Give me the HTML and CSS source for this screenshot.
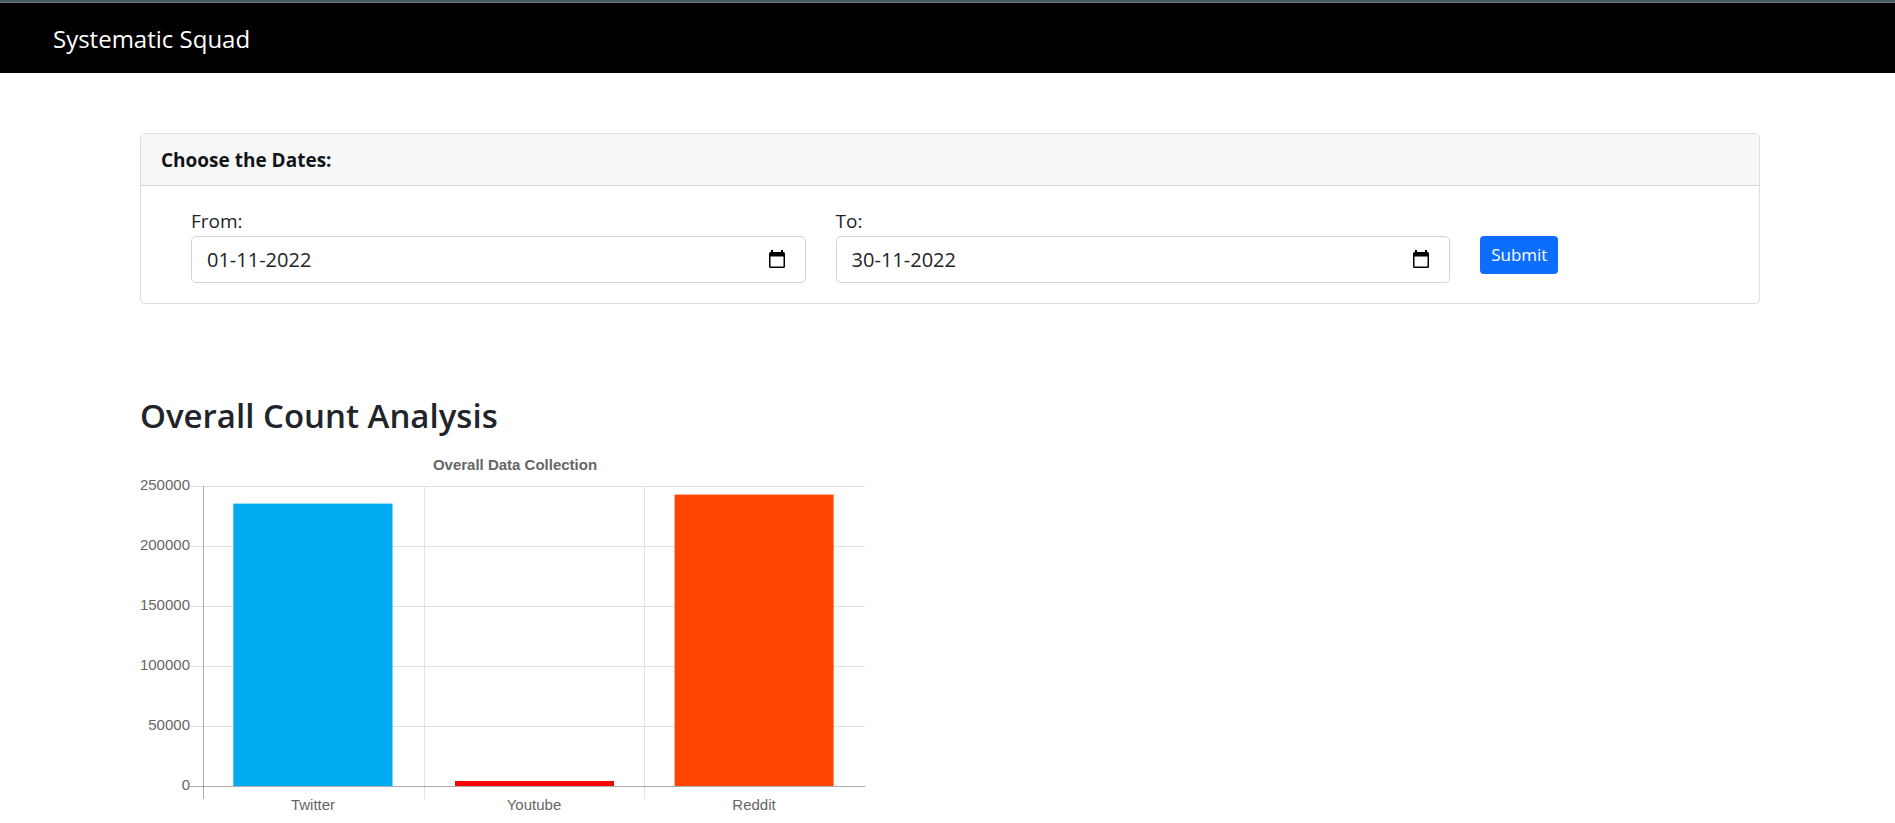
FILE: index.html
```html
<!DOCTYPE html>
<html lang="en">
<head>
<meta charset="utf-8">
<title>Systematic Squad</title>
<link rel="stylesheet" href="styles.css">
</head>
<body>
<header class="navbar">
  <a class="brand" href="#">Systematic Squad</a>
</header>
<main class="page">
  <section class="card">
    <h1 class="card-header">Choose the Dates:</h1>
    <form class="date-form">
      <div class="field">
        <label for="from">From:</label>
        <div class="date-box">
          <input id="from" type="text" value="01-11-2022">
          <button class="picker" type="button" aria-label="Pick start date">
            <svg viewBox="0 0 20 20" width="20" height="20"><path fill-rule="evenodd" d="M4 0h2v2h8V0h2v2h.5A1.500 1.500 0 0 1 18 3.500V16.500a1.500 1.500 0 0 1-1.500 1.500h-13A1.500 1.500 0 0 1 2 16.500V3.500A1.500 1.500 0 0 1 3.500 2H4zM3.500 6.500V16.500h13V6.500z"/></svg>
          </button>
        </div>
      </div>
      <div class="field">
        <label for="to">To:</label>
        <div class="date-box">
          <input id="to" type="text" value="30-11-2022">
          <button class="picker" type="button" aria-label="Pick end date">
            <svg viewBox="0 0 20 20" width="20" height="20"><path fill-rule="evenodd" d="M4 0h2v2h8V0h2v2h.5A1.500 1.500 0 0 1 18 3.500V16.500a1.500 1.500 0 0 1-1.500 1.500h-13A1.500 1.500 0 0 1 2 16.500V3.500A1.500 1.500 0 0 1 3.500 2H4zM3.500 6.500V16.500h13V6.500z"/></svg>
          </button>
        </div>
      </div>
      <div class="action">
        <button class="submit" type="submit">Submit</button>
      </div>
    </form>
  </section>
  <section class="analysis">
    <h2>Overall Count Analysis</h2>
    <svg class="chart" viewBox="0 0 750 375" role="img" aria-label="Overall Data Collection">
      <g class="grid">
        <path d="M50 41.500H725M50 101.500H725M50 161.500H725M50 221.500H725M50 281.500H725"/>
        <path d="M284.500 41V354M504.500 41V354"/>
      </g>
      <rect class="twitter" x="93.300" y="58.600" width="159.200" height="282.400"/>
      <rect class="youtube" x="315" y="336" width="159" height="5"/>
      <rect class="reddit" x="534.600" y="49.600" width="159" height="291.400"/>
      <g class="axis">
        <path d="M50 341.500H725M63.500 41V354"/>
      </g>
      <text class="title" x="375" y="25">Overall Data Collection</text>
      <g class="y-labels">
        <text x="50" y="45">250000</text>
        <text x="50" y="105">200000</text>
        <text x="50" y="165">150000</text>
        <text x="50" y="225">100000</text>
        <text x="50" y="285">50000</text>
        <text x="50" y="345">0</text>
      </g>
      <g class="x-labels">
        <text x="173" y="365">Twitter</text>
        <text x="394" y="365">Youtube</text>
        <text x="614" y="365">Reddit</text>
      </g>
    </svg>
  </section>
</main>
</body>
</html>
```
FILE: styles.css
```css
* { box-sizing: border-box; }

body {
  margin: 0;
  background: #fff;
  color: #212529;
  font-family: "Segoe UI", "Open Sans", "Noto Sans", sans-serif;
  font-size: 19px;
  line-height: 30px;
}

.navbar {
  display: flex;
  align-items: center;
  height: 73px;
  padding: 2px 53px 0;
  border-top: 2px solid #455a64;
  background: #000;
  box-shadow: inset 0 1px #69777e;
}

.brand {
  color: #fff;
  font-size: 24px;
  text-decoration: none;
}

.page { padding: 60px 135px 0 140px; }

.card {
  border: 1px solid #dfdfdf;
  border-radius: 5px;
}

.card-header {
  margin: 0;
  padding: 11px 20px 10px;
  border-bottom: 1px solid #d8d8d8;
  border-radius: 4px 4px 0 0;
  background: #f7f7f7;
  color: #101518;
  font-size: 19px;
  font-weight: 700;
}

.date-form {
  display: grid;
  grid-template-columns: repeat(12, 1fr);
  column-gap: 30px;
  padding: 20px 51px 20px 50px;
}

.field { grid-column: span 5; }

.field label { display: block; }

.date-box {
  display: flex;
  align-items: center;
  height: 47px;
  padding: 0 18px 0 15px;
  border: 1px solid #ced4da;
  border-radius: 5px;
}

.date-box input {
  flex: 1;
  min-width: 0;
  padding: 0;
  border: 0;
  background: none;
  color: #212529;
  font: inherit;
  font-size: 20px;
}

.picker {
  display: flex;
  padding: 0;
  border: 0;
  background: none;
}

.action { grid-column: span 2; padding-top: 30px; }

.submit {
  display: block;
  padding: 4px 11px;
  border: 0;
  border-radius: 4px;
  background: #0d6efd;
  color: #fff;
  font: inherit;
  font-size: 17px;
}

.analysis { padding-top: 88px; }

.analysis h2 {
  margin: 0 0 5px;
  font-size: 33px;
  font-weight: 600;
  line-height: 48px;
}

.chart {
  display: block;
  width: 750px;
  max-width: 100%;
  fill: #666;
  font-family: Arial, "Liberation Sans", sans-serif;
  font-size: 15px;
}

.grid path { stroke: #e2e2e2; }
.axis path { stroke: #000; stroke-opacity: .32; }
.twitter { fill: #00acee; }
.youtube { fill: #f00; }
.reddit { fill: #ff4500; }
.title { font-weight: 700; text-anchor: middle; }
.y-labels { text-anchor: end; }
.x-labels { text-anchor: middle; }
```
